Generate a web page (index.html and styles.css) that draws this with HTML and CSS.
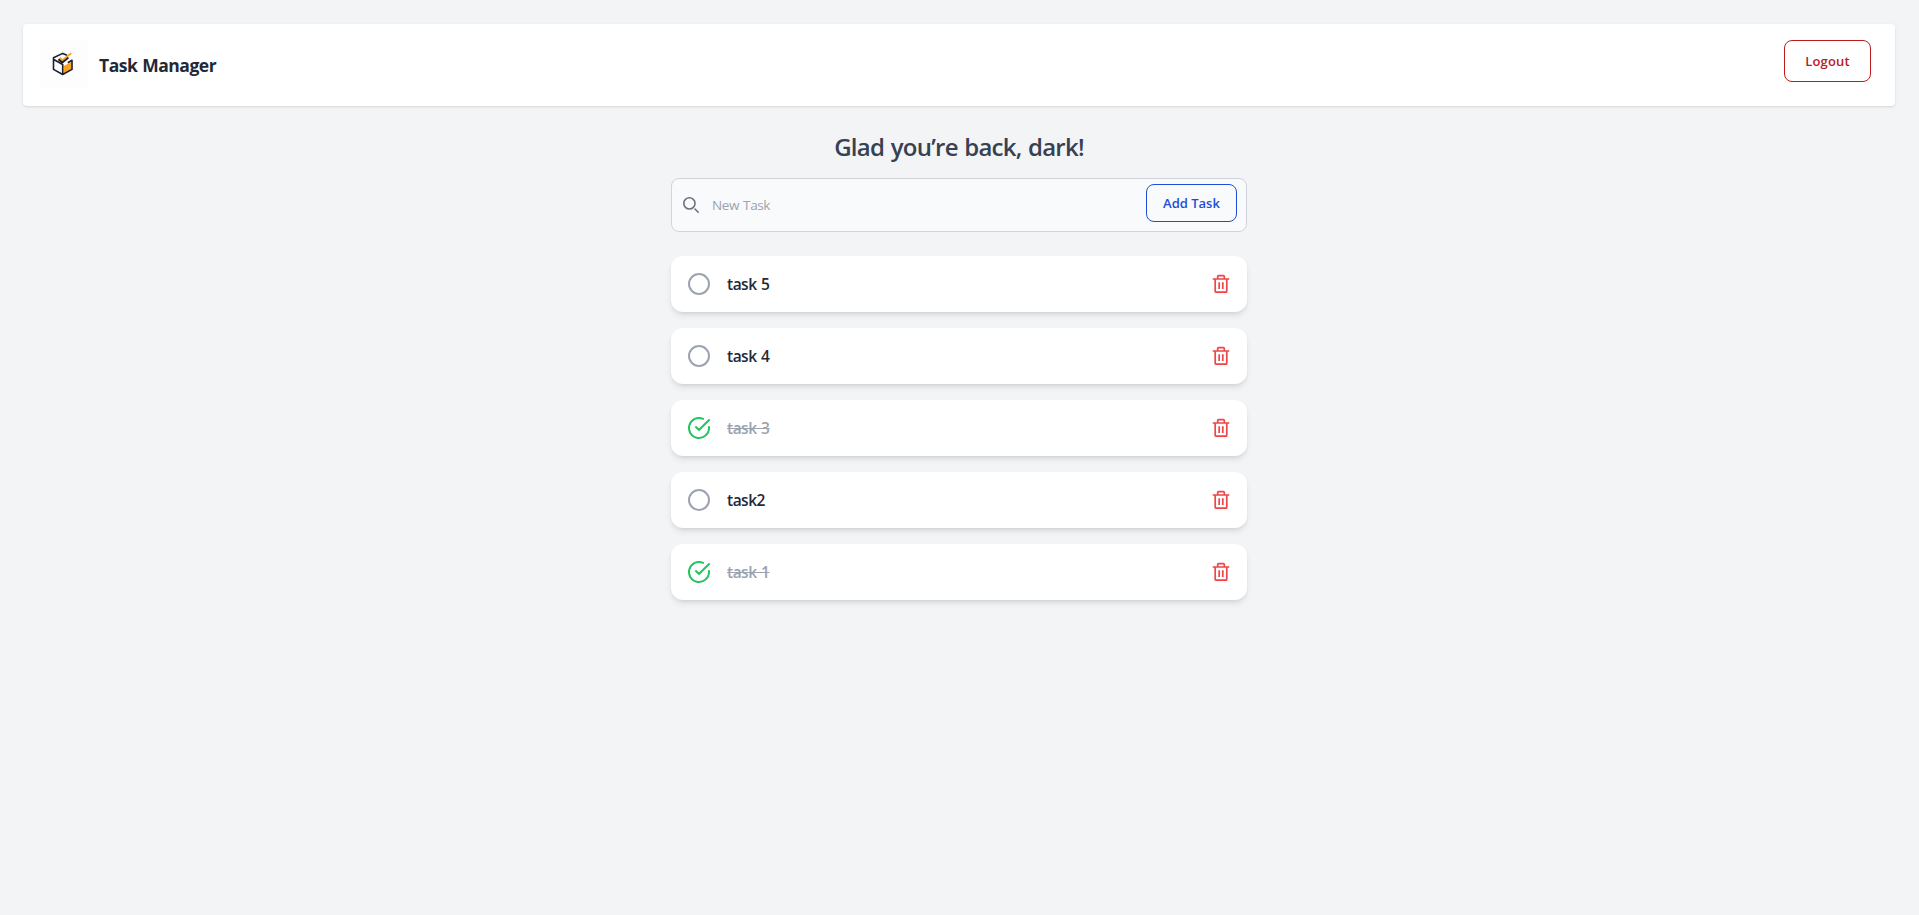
FILE: index.html
```html
<!DOCTYPE html>
<html lang="en">
<head>
<meta charset="utf-8">
<title>Task Manager</title>
<link rel="stylesheet" href="styles.css">
</head>
<body>
<svg class="defs" width="0" height="0">
  <symbol id="trash" viewBox="0 0 20 20"><path d="M1.700 5h16.600M4.200 5v12.200a1 1 0 0 0 1 1h9.600a1 1 0 0 0 1-1V5M6.700 5V2.600a1 1 0 0 1 1-1h4.600a1 1 0 0 1 1 1V5M8.200 8.300v6.600M11.800 8.300v6.600"/></symbol>
  <symbol id="open" viewBox="0 0 24 24"><circle cx="12" cy="12" r="10"/></symbol>
  <symbol id="done" viewBox="0 0 24 24"><path d="M22 11.08V12a10 10 0 1 1-5.93-9.14M22 4 12 14.01l-3-3"/></symbol>
</svg>
<header class="header">
  <div class="brand">
    <svg class="logo" viewBox="0 0 48 48">
      <path class="logo-fill" d="M23.500 25 31.500 21v7.500L23.500 33z"/>
      <path class="logo-line" d="M27 14.300 22.700 12.400l-9.200 4.400v11.600l9.200 5.100 9.300-5.100V19.300l-4.200 2.500M13.700 18.500l9 5v9.500"/>
      <path class="logo-check" d="m18.500 18.200 3.800 3.200 6-5"/>
      <path class="logo-tick" d="m19.500 16.700 3 2.400 8.700-6.900"/>
    </svg>
    <h1 class="title">Task Manager</h1>
  </div>
  <button class="button logout"><span>Logout</span></button>
</header>
<main class="main">
  <h2 class="greeting"><span>Glad you’re back, dark!</span></h2>
  <form class="entry">
    <svg class="search" viewBox="0 0 20 20"><path d="m19 19-4-4m0-7A7 7 0 1 1 1 8a7 7 0 0 1 14 0Z"/></svg>
    <span class="placeholder">New Task</span>
    <button class="button add" type="button"><span>Add Task</span></button>
  </form>
  <ul class="tasks">
    <li class="task"><svg class="state"><use href="#open"/></svg><span class="name">task 5</span><svg class="trash"><use href="#trash"/></svg></li>
    <li class="task"><svg class="state"><use href="#open"/></svg><span class="name">task 4</span><svg class="trash"><use href="#trash"/></svg></li>
    <li class="task is-done"><svg class="state"><use href="#done"/></svg><span class="name">task 3</span><svg class="trash"><use href="#trash"/></svg></li>
    <li class="task"><svg class="state"><use href="#open"/></svg><span class="name">task2</span><svg class="trash"><use href="#trash"/></svg></li>
    <li class="task is-done"><svg class="state"><use href="#done"/></svg><span class="name">task 1</span><svg class="trash"><use href="#trash"/></svg></li>
  </ul>
</main>
</body>
</html>
```
FILE: styles.css
```css
* { box-sizing: border-box; }
body {
  margin: 0;
  padding: 24px 24px 0 23px;
  min-height: 100vh;
  background: #f3f4f6;
  color: #1f2937;
  font-family: "Segoe UI", "Open Sans", "Noto Sans", sans-serif;
}
h1, h2, ul { margin: 0; padding: 0; }
svg { flex: none; fill: none; stroke: currentColor; }
.defs { display: block; height: 0; }
.header {
  display: flex;
  justify-content: space-between;
  align-items: flex-start;
  height: 82px;
  padding: 16px 24px 0 17px;
  border-radius: 4px;
  background: #fff;
  box-shadow: 0 1px 3px rgba(0,0,0,.1), 0 1px 2px -1px rgba(0,0,0,.1);
}
.brand { display: flex; align-items: center; gap: 11px; padding-top: 1px; }
.logo { width: 48px; height: 48px; background: #fdfdfd; stroke-linejoin: round; }
.logo-fill { fill: #fba31c; stroke: none; }
.logo-line { stroke: #1b2030; stroke-width: 1.6; }
.logo-check { stroke: #1b2030; stroke-width: 2.2; }
.logo-tick { stroke: #fba31c; stroke-width: 1.8; }
.title { font-size: 17.5px; line-height: 28px; font-weight: 700; white-space: nowrap; letter-spacing: -.5px; word-spacing: 1px; }
.button {
  border: 1px solid;
  border-radius: 8px;
  background: transparent;
  padding: 0;
  font: 600 13px/20px "Segoe UI", "Open Sans", "Noto Sans", sans-serif;
}
.logout { width: 87px; height: 42px; color: #b91c1c; letter-spacing: .2px; }
.main { width: 576px; margin: 24px auto 0; }
.greeting { height: 36px; font-size: 24px; line-height: 34px; font-weight: 600; letter-spacing: -.75px; word-spacing: 1px; color: #374151; text-align: center; white-space: nowrap; }
.entry {
  display: flex;
  align-items: center;
  height: 54px;
  margin-top: 12px;
  padding: 0 9px 0 11px;
  border: 1px solid #d1d5db;
  border-radius: 8px;
  background: #f9fafb;
}
.search { width: 16px; height: 16px; color: #6b7280; stroke-width: 2; stroke-linecap: round; stroke-linejoin: round; }
.placeholder { margin-left: 13px; color: #9ca3af; font-size: 13.5px; line-height: 20px; letter-spacing: -.4px; word-spacing: 1px; }
.add { width: 91px; height: 38px; margin: 0 0 4px auto; color: #1d4ed8; }
.tasks { display: grid; gap: 16px; margin-top: 24px; list-style: none; }
.task {
  display: flex;
  align-items: center;
  height: 56px;
  padding: 0 16px;
  border-radius: 12px;
  background: #fff;
  box-shadow: 0 4px 6px -1px rgba(0,0,0,.1), 0 2px 4px -2px rgba(0,0,0,.1);
}
.state { width: 24px; height: 24px; color: #9ca3af; stroke-width: 2; stroke-linecap: round; stroke-linejoin: round; }
.name { margin-left: 16px; font-size: 15.5px; line-height: 24px; font-weight: 600; letter-spacing: -.5px; word-spacing: 1px; }
.trash { width: 20px; height: 20px; margin-left: auto; color: #ef4444; stroke-width: 1.7; }
.is-done .state { color: #22c55e; }
.is-done .name { color: #9ca3af; text-decoration: line-through; }
```
